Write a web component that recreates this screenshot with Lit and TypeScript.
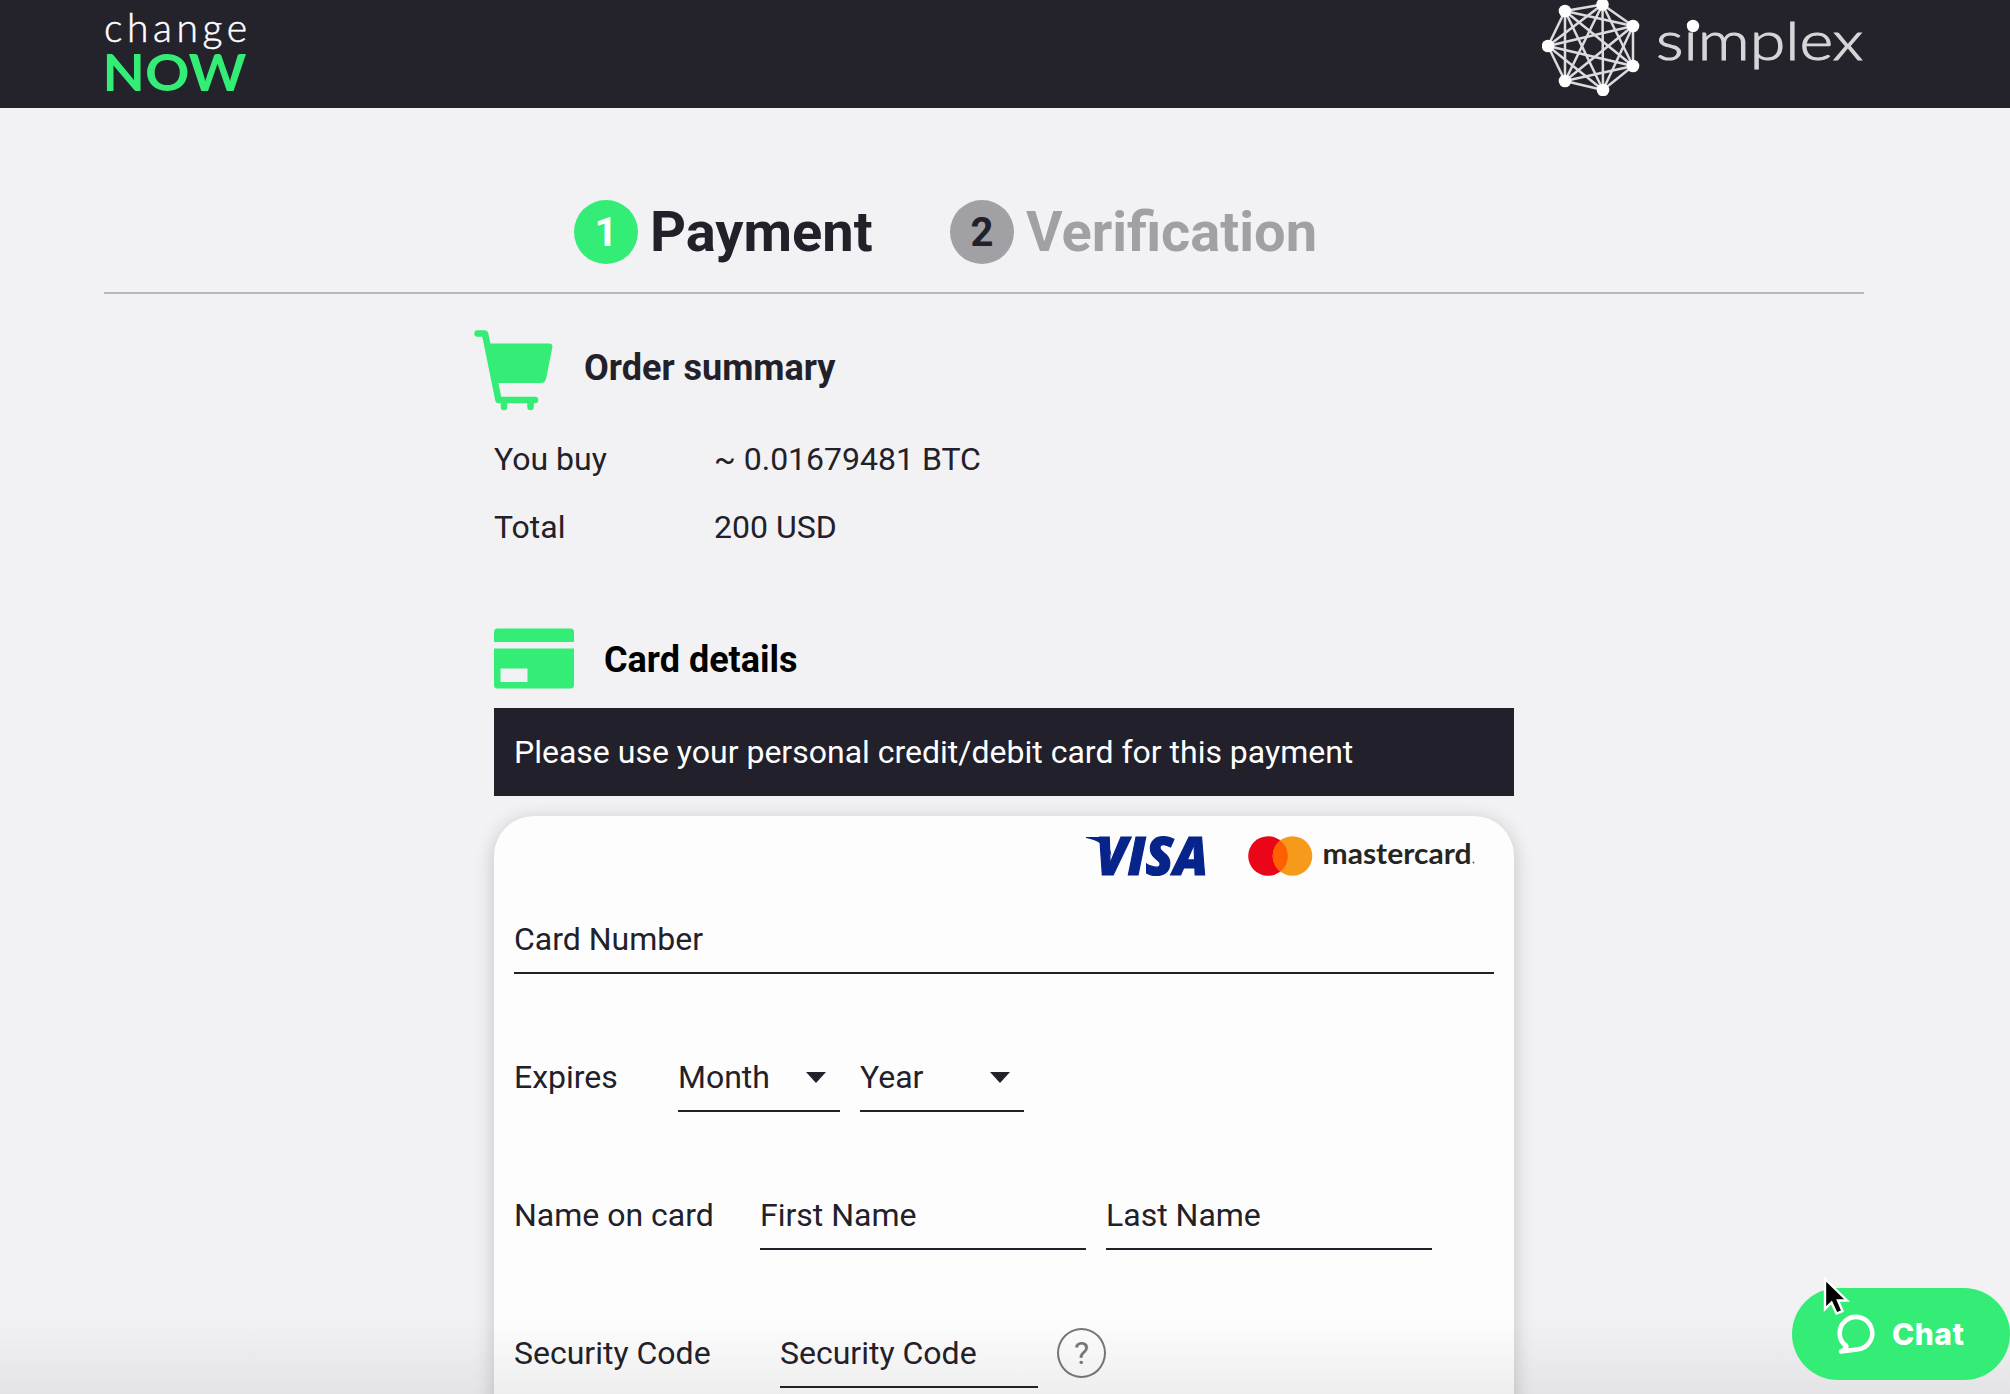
import { LitElement, html, css, svg } from "lit";
import { customElement, property } from "lit/decorators.js";

const NODES = [
  [45, 11], [82.5, 4.5], [113, 26], [113, 66], [83, 90], [45, 81], [28, 46],
];

@customElement("brand-header")
class BrandHeader extends LitElement {
  static styles = css`
    :host { display: block; }
    .bar {
      display: flex;
      justify-content: space-between;
      height: 108px;
      padding: 0 124px 0 104px;
      background: #24232b;
    }
    svg { display: block; }
    .light { font-family: Lato, "Liberation Sans", sans-serif; font-weight: 300; fill: #fff; }
    .now { font-family: Lato, "Liberation Sans", sans-serif; font-weight: 700; fill: #33ed76; }
    .simplex { fill: #d6d6d8; stroke: #d6d6d8; stroke-width: 1.1; }
  `;

  render() {
    const edges = NODES.flatMap((a, i) =>
      NODES.slice(i + 1).map(
        (b) => svg`<line x1=${a[0]} y1=${a[1]} x2=${b[0]} y2=${b[1]}></line>`
      )
    );
    return html`
      <header class="bar">
        <svg width="160" height="108" viewBox="0 0 160 108">
          <text class="light" x="0" y="42" font-size="39" textLength="143" stroke="#fff" stroke-width="0.5">change</text>
          <text class="now" x="-1.5" y="91" font-size="51.5" textLength="144" lengthAdjust="spacingAndGlyphs">NOW</text>
        </svg>
        <svg width="344" height="96" viewBox="22 0 344 96">
          <g stroke="#dcdcde" stroke-width="2.5">${edges}</g>
          <g fill="#fff">
            ${NODES.map((n) => svg`<circle cx=${n[0]} cy=${n[1]} r="6.3"></circle>`)}
          </g>
          <text class="light simplex" x="136" y="60" font-size="54" textLength="207" lengthAdjust="spacingAndGlyphs">simplex</text>
          <circle cx="173" cy="26" r="6.2" fill="#fff"></circle>
        </svg>
      </header>
    `;
  }
}

@customElement("progress-steps")
class ProgressSteps extends LitElement {
  static styles = css`
    :host { display: block; }
    .steps {
      display: flex;
      margin: 0 146px 0 104px;
      padding: 92px 0 28px 470px;
      border-bottom: 2px solid #b9b9b9;
    }
    .step { display: flex; align-items: center; height: 64px; color: #222029; }
    .num {
      display: grid;
      place-items: center;
      width: 64px;
      height: 64px;
      margin-right: 12px;
      border-radius: 50%;
      font-size: 40px;
      line-height: 66px;
      font-weight: 700;
      background: #a1a1a5;
    }
    .label { font-size: 56px; line-height: 64px; font-weight: 700; width: 300px; white-space: nowrap; }
    .active .num { background: #33ed76; color: #fff; }
    .pending .label { color: #a1a1a5; }
  `;

  render() {
    return html`
      <div class="steps">
        <div class="step active"><span class="num">1</span><span class="label">Payment</span></div>
        <div class="step pending"><span class="num">2</span><span class="label">Verification</span></div>
      </div>
    `;
  }
}

@customElement("line-field")
class LineField extends LitElement {
  static styles = css`
    :host { display: block; box-sizing: border-box; height: 70px; border-bottom: 2px solid #222029; }
    .field {
      display: flex;
      align-items: center;
      justify-content: space-between;
      height: 66px;
      padding: 2px 14px 0 0;
      white-space: nowrap;
    }
  `;
  @property() text = "";
  @property({ type: Boolean }) select = false;

  render() {
    return html`
      <div class="field">
        <span>${this.text}</span>
        ${this.select
          ? html`<svg width="20" height="11" viewBox="0 0 20 11"><path d="M0 0h20L10 11z" fill="#222029" /></svg>`
          : null}
      </div>
    `;
  }
}

@customElement("app-root")
class AppRoot extends LitElement {
  static styles = css`
    :host {
      display: block;
      position: relative;
      height: 1394px;
      overflow: hidden;
      background: #f2f1f3;
      color: #222029;
      font-family: Roboto, "Liberation Sans", sans-serif;
      font-size: 32px;
      line-height: 38px;
    }
    svg { display: block; flex: none; overflow: visible; }
    main { width: 1020px; margin-left: 494px; }
    .heading { display: flex; align-items: center; font-size: 36px; line-height: 42px; font-weight: 700; }
    .order { height: 80px; margin: 36px 0 15px -20px; gap: 30px; }
    .order span { position: relative; top: -2px; }
    .row { display: flex; align-items: center; height: 68px; }
    .key { width: 220px; }
    .details { height: 62px; margin: 67px 0 18px; gap: 30px; color: #000; }
    .details span { padding-top: 2px; }
    .banner {
      display: flex;
      align-items: center;
      height: 88px;
      padding: 0 20px;
      background: #22202a;
      color: #fff;
    }
    .card {
      height: 700px;
      margin-top: 20px;
      padding: 0 20px;
      border-radius: 40px;
      background: #fdfdfd;
      box-shadow: 0 4px 20px rgba(0, 0, 0, 0.2);
    }
    .brands { display: flex; justify-content: flex-end; height: 68px; padding: 20px 19px 0 0; gap: 40px; }
    .visa { font-family: "Open Sans", sans-serif; font-weight: 800; font-style: italic; fill: #06248a; stroke: #06248a; stroke-width: 1.2; }
    .mc { font-family: Lato, sans-serif; font-weight: 700; fill: #26251f; }
    .form { display: flex; flex-direction: column; gap: 68px; }
    .line { display: flex; height: 70px; }
    .lab { padding-top: 16px; white-space: nowrap; }
    .w164 { width: 164px; }
    .w246 { width: 246px; }
    .w266 { width: 266px; }
    .w162 { width: 162px; }
    .w326 { width: 326px; }
    .w258 { width: 258px; }
    .full { flex: 1; }
    .gap { margin-left: 20px; }
    .help {
      display: grid;
      place-items: center;
      box-sizing: border-box;
      width: 49px;
      height: 50px;
      margin: 10px 0 0 19px;
      border: 2px solid #77777b;
      border-radius: 50%;
      color: #77777b;
    }
    .fade {
      position: absolute;
      left: 0;
      right: 0;
      bottom: 0;
      height: 76px;
      background: linear-gradient(rgba(40, 38, 50, 0), rgba(40, 38, 50, 0.07));
    }
    .chat {
      position: absolute;
      right: 0;
      bottom: 14px;
      display: flex;
      align-items: center;
      box-sizing: border-box;
      width: 218px;
      height: 92px;
      padding-left: 44px;
      gap: 16px;
      border-radius: 46px;
      background: #33ed76;
      color: #fff;
      font-family: Inter, sans-serif;
      font-size: 30px;
      font-weight: 800;
      letter-spacing: 0.5px;
    }
    .pointer { position: absolute; left: 1822px; top: 1276px; }
  `;

  render() {
    return html`
      <brand-header></brand-header>
      <progress-steps></progress-steps>
      <main>
        <div class="heading order">
          <svg width="80" height="80" viewBox="0 0 80 80" fill="#33ed76">
            <path d="M3.5 3.5H11L24.5 70H61" fill="none" stroke="#33ed76" stroke-width="6.5" stroke-linecap="round" stroke-linejoin="round" />
            <path d="M12 13.5H75q4 0 3.300 4L72 49q-.8 4-5 4H21z" />
            <path d="M30 71v6M56.500 71v6" stroke="#33ed76" stroke-width="6.500" stroke-linecap="round" />
          </svg>
          <span>Order summary</span>
        </div>
        <div class="row"><span class="key">You buy</span><span>~ 0.01679481 BTC</span></div>
        <div class="row"><span class="key">Total</span><span>200 USD</span></div>

        <div class="heading details">
          <svg width="80" height="62" viewBox="0 0 80 62" fill="#33ed76">
            <path d="M0 14V4q0-3.500 3.500-3.500h73q3.500 0 3.500 3.500v10z" />
            <path fill-rule="evenodd" d="M0 20.500h80V57q0 3.500-3.500 3.500h-73Q0 60.500 0 57zM6.500 40.500v13.500H33.500V40.500z" />
          </svg>
          <span>Card details</span>
        </div>
        <div class="banner">Please use your personal credit/debit card for this payment</div>

        <section class="card">
          <div class="brands">
            <svg width="122" height="40" viewBox="0 0 122 40">
              <path d="M0 1h16q5 0 6.500 5l3 14Q18 5 0 2z" fill="#06248a" />
              <text class="visa" x="10" y="38.500" font-size="53" textLength="112" lengthAdjust="spacingAndGlyphs">VISA</text>
            </svg>
            <svg width="227" height="40" viewBox="0 0 227 40">
              <circle cx="20" cy="20" r="19.800" fill="#eb0519" />
              <circle cx="44.500" cy="20" r="19.800" fill="#f79a1c" />
              <path d="M32.250 4.400a19.800 19.800 0 0 1 0 31.200a19.800 19.800 0 0 1 0-31.200z" fill="#ff5f00" />
              <text class="mc" x="74.500" y="27.500" font-size="28" textLength="149" lengthAdjust="spacingAndGlyphs">mastercard</text>
              <circle cx="225.500" cy="26.500" r="0.900" fill="#55544e" />
            </svg>
          </div>
          <div class="form">
            <div class="line"><line-field class="full" text="Card Number"></line-field></div>
            <div class="line">
              <span class="lab w164">Expires</span>
              <line-field class="w162" text="Month" select></line-field>
              <line-field class="w164 gap" text="Year" select></line-field>
            </div>
            <div class="line">
              <span class="lab w246">Name on card</span>
              <line-field class="w326" text="First Name"></line-field>
              <line-field class="w326 gap" text="Last Name"></line-field>
            </div>
            <div class="line">
              <span class="lab w266">Security Code</span>
              <line-field class="w258" text="Security Code"></line-field>
              <span class="help">?</span>
            </div>
          </div>
        </section>
      </main>
      <div class="fade"></div>
      <div class="chat">
        <svg width="40" height="42" viewBox="0 0 40 42">
          <path d="M10.500 33.500A16.300 16.300 0 1 1 21 36.500L5 38.500Q10 36.500 10 32.500A16.300 16.300 0 0 1 5 27" fill="none" stroke="#fff" stroke-width="4.600" stroke-linejoin="round" stroke-linecap="round" />
        </svg>
        <span>Chat</span>
      </div>
      <svg class="pointer" width="28" height="40" viewBox="0 0 28 40">
        <path d="M3 3v30l6.500-6.500 5 11 6-2.500-4.500-10.500H25z" fill="#000" stroke="#fff" stroke-width="2.400" />
      </svg>
    `;
  }
}
